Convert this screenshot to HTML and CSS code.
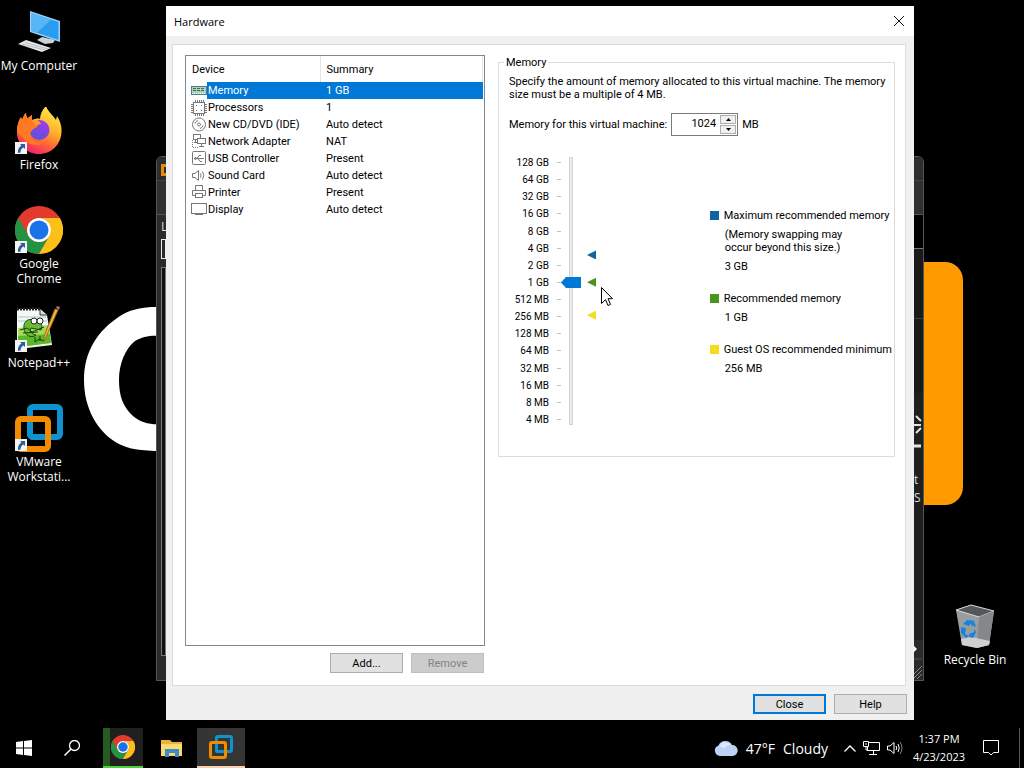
FILE: index.html
```html
<!DOCTYPE html>
<html lang="en">
<head>
  <title>Hardware</title>
  <meta charset="UTF-8">
  <link rel="stylesheet" href="styles.css">
</head>
<body>
  <!-- Shared icons -->
  <svg class="sprite" aria-hidden="true">
    <symbol id="chrome" viewBox="0 0 48 48">
      <circle cx="24" cy="24" r="24" fill="#e23b2e"/>
      <path d="M3.2 12L13.6 30A12 12 0 0 0 34.4 30L24 48A24 24 0 0 1 3.2 12Z" fill="#229342"/>
      <path d="M44.8 12A24 24 0 0 1 24 48L34.4 30A12 12 0 0 0 24 12Z" fill="#fbc116"/>
      <circle cx="24" cy="24" r="12" fill="#fff"/>
      <circle cx="24" cy="24" r="9.5" fill="#1a73e8"/>
    </symbol>
    <symbol id="vmware" viewBox="0 0 48 48">
      <rect x="15" y="3" width="30" height="30" rx="3" fill="none" stroke="#0f93d0" stroke-width="6"/>
      <rect x="3" y="15" width="30" height="30" rx="3" fill="none" stroke="#f38b00" stroke-width="6"/>
      <path d="M15 18v12a3 3 0 0 0 3 3h8" fill="none" stroke="#0f93d0" stroke-width="6"/>
    </symbol>
    <symbol id="shortcut" viewBox="0 0 12 12">
      <rect width="12" height="12" fill="#f4f4f4"/>
      <path d="M5 2h5v5L8.5 5.5C6.5 6.5 5.5 8 5.5 10.5L3 11C2.5 7.5 4 5 6.500 3.5Z" fill="#2c5c9c"/>
    </symbol>
  </svg>

  <main class="desktop">
    <div class="wallpaper-orange"></div>
    <svg class="wallpaper-ring" viewBox="0 0 80 146" aria-hidden="true">
      <path d="M80 1H68C56 2 46 4 37 10C14 25 1 46 1 74C1 102 14 125 34 137C45 143 57 145 80 145V118C68 119 58 117 50 110C40 101 36 90 36 74C36 58 42 43 52 35C60 30 68 29 80 30Z" fill="#fff"/>
    </svg>

    <nav class="shortcuts">
      <a href="#" class="shortcut">
        <svg class="shortcut-icon" viewBox="0 0 48 48">
          <path d="M15 3L45 13V34L15 24Z" fill="#9bd3f5"/>
          <path d="M16.5 5L43.5 14V32L16.5 23Z" fill="#2b9df0"/>
          <path d="M16.5 5L36 11.5L22 25L16.5 23Z" fill="#58b6f6"/>
          <path d="M22 32L27 29L40 32L38 35L30 36Z" fill="#c9d3d8"/>
          <path d="M3 36L11 32L36 40L27 44Z" fill="#e5e8e9"/>
          <path d="M7 36L30 42M10 34.5L33 41" stroke="#b7bcbf" stroke-width="1"/>
        </svg>
        <span>My Computer</span>
      </a>
      <a href="#" class="shortcut">
        <svg class="shortcut-icon" viewBox="0 0 48 48">
          <defs>
            <linearGradient id="fire" x1="0.8" y1="0" x2="0.35" y2="1">
              <stop offset="0" stop-color="#fff04a"/>
              <stop offset="0.45" stop-color="#ffb02a"/>
              <stop offset="0.7" stop-color="#ff6a35"/>
              <stop offset="1" stop-color="#f3206b"/>
            </linearGradient>
            <linearGradient id="globe" x1="0.8" y1="0" x2="0.2" y2="1">
              <stop offset="0" stop-color="#a33bea"/>
              <stop offset="1" stop-color="#5553d8"/>
            </linearGradient>
          </defs>
          <path d="M31 -1C33 5 38 8 41 13L42 9C45 14 47 19 46.5 25C46 38 36 47 24 47C11 47 2 37 2 25C2 18 4 13 6 10L7 13C9 9 9 7 11 6C11 9 12 11 13 11L17 8L17 13C20 12 23 11 25 12C25 7 28 2 31 -1Z" fill="url(#fire)"/>
          <circle cx="24.5" cy="23" r="10" fill="url(#globe)"/>
          <path d="M2 25C2 18 4 13 6 10L7 13C9 9 9 7 11 6C11 9 12 11 13 11L17 8L17 13C19 15 20 17 24 17L22 20C18 22 15 24 15 29C17 34 23 37 30 34C24 41 11 38 7 29Z" fill="#ff7a22"/>
          <path d="M17 13C20 12 25 13 26 17L20 18Z" fill="#ff9a2d"/>
        </svg>
        <svg class="arrow"><use href="#shortcut"/></svg>
        <span>Firefox</span>
      </a>
      <a href="#" class="shortcut">
        <svg class="shortcut-icon"><use href="#chrome"/></svg>
        <svg class="arrow"><use href="#shortcut"/></svg>
        <span>Google<br>Chrome</span>
      </a>
      <a href="#" class="shortcut">
        <svg class="shortcut-icon" viewBox="0 0 48 48">
          <path d="M2 4H25L32 10L37 40L12 43L2 42Z" fill="#f4f8f2"/>
          <path d="M3 12H31M3 16H32" stroke="#a9c6df" stroke-width="1"/>
          <path d="M3 23L34 20L36 38L12 41L3 40Z" fill="#a4dc56"/>
          <path d="M3 31L35 29L36 38L12 41L3 40Z" fill="#59b928"/>
          <path d="M2 4H26" stroke="#222" stroke-width="3" stroke-dasharray="2 1"/>
          <path d="M25 4V10H32" fill="#ddd" stroke="#333"/>
          <path d="M21 17C14 11 8 17 9 23C9 30 16 34 21 30C17 29 14 26 16 23L26 25C28 20 26 17 21 17Z" fill="#67bd35" stroke="#1d4714"/>
          <circle cx="19" cy="16" r="3" fill="#fff" stroke="#222"/>
          <circle cx="25" cy="16" r="3" fill="#fff" stroke="#222"/>
          <path d="M5 25L12 23L17 27L29 22M8 28L23 27M20 32V37L24 34L29 36M25 31V36" fill="none" stroke="#173f14"/>
          <path d="M43 5L31 32L29 36L29 31L40 4Z" fill="#f6b635" stroke="#a06923"/>
          <path d="M41 3L44 5L45 2L42 1Z" fill="#ba696c"/>
        </svg>
        <svg class="arrow"><use href="#shortcut"/></svg>
        <span>Notepad++</span>
      </a>
      <a href="#" class="shortcut">
        <svg class="shortcut-icon"><use href="#vmware"/></svg>
        <svg class="arrow"><use href="#shortcut"/></svg>
        <span>VMware<br>Workstati...</span>
      </a>
    </nav>

    <a href="#" class="shortcut recycle">
      <svg class="shortcut-icon" viewBox="0 0 48 48">
        <path d="M5 8L20 3L43 9L38 43L26 46L11 43Z" fill="#9a9d9e"/>
        <path d="M5 8L20 3L43 9L28 15Z" fill="#55585a" stroke="#d5d7d8"/>
        <path d="M28 15L43 9L38 43L26 46Z" fill="#858889"/>
        <path d="M10 37L20 35L39 39L38 43L26 46L11 43Z" fill="#cfd0cf"/>
        <path d="M12 22L16 18L21 19L18 24ZM19 18L23 19L25 25L20 23ZM10 25L15 26L14 32L18 34L15 36L10 31ZM18 32L23 30V27L25 30L22 36L18 35Z" fill="#1583e0"/>
      </svg>
      <span>Recycle Bin</span>
    </a>

    <!-- Workstation window behind the dialog -->
    <section class="back-window">
      <div class="edge edge-left">
        <div class="edge-title"><i class="edge-logo"></i></div>
        <div class="edge-menu"></div>
        <div class="edge-label">L</div>
        <div class="edge-search"></div>
        <div class="edge-tree"></div>
      </div>
      <div class="edge edge-right">
        <div class="edge-title"></div>
        <div class="edge-menu"></div>
        <div class="edge-tabs"></div>
        <div class="edge-view"></div>
        <div class="edge-home">
          <svg viewBox="0 0 8 50" width="8" height="50" aria-hidden="true">
            <path d="M0 20H7M2 11L7 16M2 28L7 23" stroke="#e4e4e4" stroke-width="2"/>
            <path d="M0 41H7" stroke="#e4e4e4" stroke-width="3"/>
          </svg>
          <span>t</span>
          <span>S</span>
        </div>
        <svg class="edge-grip" viewBox="0 0 8 40" aria-hidden="true">
          <path d="M0 6L3 9L0 12Z" fill="#fff"/>
          <path d="M0 19H8" stroke="#555"/>
          <path d="M0 34L8 26M0 38L8 30M3 39L8 34" stroke="#888"/>
        </svg>
      </div>
    </section>

    <!-- Hardware dialog -->
    <section class="dialog" role="dialog" aria-labelledby="dialog-title">
      <header class="titlebar">
        <h1 id="dialog-title">Hardware</h1>
        <button class="close-x" aria-label="Close window">
          <svg viewBox="0 0 10 10" width="10" height="10"><path d="M0 0L10 10M10 0L0 10" stroke="#111"/></svg>
        </button>
      </header>

      <div class="panel">
        <div class="devices">
          <div class="listbox">
            <table class="device-table">
              <thead>
                <tr><th>Device</th><th>Summary</th></tr>
              </thead>
              <tbody>
                <tr class="selected">
                  <td><svg viewBox="0 0 16 16"><rect x="0.5" y="3.5" width="15" height="8" fill="#a8d5b5" stroke="#5a7792"/><path d="M2 5.500H14M2 7.500H14" stroke="#46646b" stroke-dasharray="3 1"/><path d="M1 10.500H15" stroke="#fff" stroke-dasharray="1 1"/></svg><span>Memory</span></td>
                  <td>1 GB</td>
                </tr>
                <tr>
                  <td><svg viewBox="0 0 16 16"><rect x="2.5" y="2.5" width="11" height="11"/><path d="M4.5 0V2M6.5 0V2M8.5 0V2M10.5 0V2M12.5 0V2M4.5 14V16M6.5 14V16M8.5 14V16M10.5 14V16M12.5 14V16M0 4.5H2M0 6.5H2M0 8.5H2M0 10.5H2M0 12.5H2M14 4.5H16M14 6.5H16M14 8.5H16M14 10.5H16M14 12.5H16M5 5.5H6M10 5.5H11M5 10.5H6M10 10.5H11"/></svg><span>Processors</span></td>
                  <td>1</td>
                </tr>
                <tr>
                  <td><svg viewBox="0 0 16 16"><circle cx="8" cy="7.5" r="6.5"/><circle cx="8" cy="7.5" r="1.5"/><path d="M4 6.5A4 4 0 0 1 7 3.5M9 11.5A4 4 0 0 0 12 8.5"/></svg><span>New CD/DVD (IDE)</span></td>
                  <td>Auto detect</td>
                </tr>
                <tr>
                  <td><svg viewBox="0 0 16 16"><rect x="2.5" y="0.5" width="7" height="5"/><rect x="6.5" y="4.5" width="8" height="5" fill="#fff"/><path d="M10.5 10V12M8 12.5H13M4.5 6V8M3 8.5H6"/><path d="M1.5 6V13.5H8" stroke-dasharray="1 1"/></svg><span>Network Adapter</span></td>
                  <td>NAT</td>
                </tr>
                <tr>
                  <td><svg viewBox="0 0 16 16"><rect x="1.5" y="0.5" width="13" height="13" rx="1"/><path d="M3 7.5H13M6 7.5L8 4.5H10M7 7.5L9 10.5H11"/><circle cx="4.5" cy="7.5" r="1"/></svg><span>USB Controller</span></td>
                  <td>Present</td>
                </tr>
                <tr>
                  <td><svg viewBox="0 0 16 16"><path d="M1.5 5.5H4L7.5 2.5V12.5L4 9.5H1.5ZM9.5 5.5Q10.5 7.5 9.5 9.5M11.5 3.5Q14 7.5 11.5 11.5"/></svg><span>Sound Card</span></td>
                  <td>Auto detect</td>
                </tr>
                <tr>
                  <td><svg viewBox="0 0 16 16"><path d="M4.5 5V0.5H11.5V5M4 10.5H1.5V5.5H14.5V10.5H12"/><rect x="4.5" y="8.5" width="7" height="4"/></svg><span>Printer</span></td>
                  <td>Present</td>
                </tr>
                <tr>
                  <td><svg viewBox="0 0 16 16"><rect x="0.5" y="1.5" width="15" height="10"/><path d="M4 12.5H12"/></svg><span>Display</span></td>
                  <td>Auto detect</td>
                </tr>
              </tbody>
            </table>
          </div>
          <div class="device-buttons">
            <button class="btn">Add...</button>
            <button class="btn" disabled>Remove</button>
          </div>
        </div>

        <fieldset class="memory">
          <legend>Memory</legend>
          <p>Specify the amount of memory allocated to this virtual machine. The memory size must be a multiple of 4 MB.</p>

          <div class="memory-row">
            <label for="memory-size">Memory for this virtual machine:</label>
            <div class="spinner">
              <input type="text" id="memory-size" value="1024">
              <div class="spinner-buttons">
                <button aria-label="Increase"><svg viewBox="0 0 5 3" width="5" height="3"><path d="M0 3L2.5 0L5 3Z"/></svg></button>
                <button aria-label="Decrease"><svg viewBox="0 0 5 3" width="5" height="3"><path d="M0 0L2.5 3L5 0Z"/></svg></button>
              </div>
            </div>
            <span>MB</span>
          </div>

          <div class="memory-scale">
            <ul class="scale-labels">
              <li>128 GB</li>
              <li>64 GB</li>
              <li>32 GB</li>
              <li>16 GB</li>
              <li>8 GB</li>
              <li>4 GB</li>
              <li>2 GB</li>
              <li>1 GB</li>
              <li>512 MB</li>
              <li>256 MB</li>
              <li>128 MB</li>
              <li>64 MB</li>
              <li>32 MB</li>
              <li>16 MB</li>
              <li>8 MB</li>
              <li>4 MB</li>
            </ul>
            <input type="range" class="scale-slider" min="0" max="15" value="8" aria-label="Memory size">
            <div class="scale-marks">
              <i class="mark max" style="top: 37%"></i>
              <i class="mark rec" style="top: 47%"></i>
              <i class="mark min" style="top: 59%"></i>
            </div>
            <dl class="legend">
              <dt class="max">Maximum recommended memory</dt>
              <dd>(Memory swapping may<br>occur beyond this size.)</dd>
              <dd>3 GB</dd>
              <dt class="rec">Recommended memory</dt>
              <dd>1 GB</dd>
              <dt class="min">Guest OS recommended minimum</dt>
              <dd>256 MB</dd>
            </dl>
          </div>
        </fieldset>
      </div>

      <footer class="dialog-buttons">
        <button class="btn default">Close</button>
        <button class="btn">Help</button>
      </footer>
    </section>

    <svg class="cursor" viewBox="0 0 12 20" aria-hidden="true">
      <path d="M0.5 0.5V16.5L4.5 12.7L7 18.5L9.5 17.4L7 11.7H11.5Z" fill="#fff" stroke="#000"/>
    </svg>
  </main>

  <footer class="taskbar">
    <button class="task" aria-label="Start">
      <svg viewBox="0 0 16 16" width="16" height="16" fill="#fff"><path d="M0 2L7 1V7.5H0ZM8 1L16 0V7.5H8ZM0 8.5H7V15L0 14ZM8 8.5H16V16L8 15Z"/></svg>
    </button>
    <button class="task" aria-label="Search">
      <svg viewBox="0 0 16 16" width="16" height="16" fill="none" stroke="#fff"><circle cx="10.5" cy="5.5" r="5" stroke-width="1.3"/><path d="M7 9L0.5 15.5" stroke-width="1.5"/></svg>
    </button>
    <button class="task chrome" aria-label="Google Chrome">
      <svg width="24" height="24"><use href="#chrome"/></svg>
    </button>
    <button class="task files" aria-label="File Explorer">
      <svg viewBox="0 0 22 18" width="22" height="18"><path d="M0 1H9L11 3H21V17H0Z" fill="#e8b339"/><path d="M0 5H21V17H0Z" fill="#fbdb6b"/><path d="M4 10H18V18H14V14H8V18H4Z" fill="#3d8bce"/></svg>
    </button>
    <button class="task active" aria-label="VMware Workstation">
      <svg width="24" height="24"><use href="#vmware"/></svg>
    </button>

    <div class="tray">
      <a href="#" class="weather">
        <svg viewBox="0 0 24 16" width="24" height="16"><path d="M6 16A6 5.5 0 0 1 4.5 5.5A7.5 7.5 0 0 1 18 5A5.5 5.5 0 0 1 18.5 16Z" fill="#bcd3f5"/><path d="M5 7A7 7 0 0 1 17 5Q12 5 10 9Q8 6 5 7Z" fill="#dce8fb"/></svg>
        <span>47°F</span>
        <span>Cloudy</span>
      </a>
      <svg viewBox="0 0 12 7" width="12" height="7" fill="none" stroke="#fff"><path d="M0.5 6.5L6 1L11.5 6.5" stroke-width="1.3"/></svg>
      <svg viewBox="0 0 17 14" width="17" height="14" fill="none" stroke="#fff"><path d="M6 1.5H16.5V9.5H4.5V6M10.5 10V13M6 13.5H14"/><path d="M0.5 0.5H5.5V5.5H0.5ZM2 3H4M3 5V9H5"/></svg>
      <svg viewBox="0 0 16 14" width="16" height="14" fill="none" stroke="#fff"><path d="M0.5 5H3L7 1.5V12.5L3 9H0.5ZM9 5Q10.5 7 9 9M11 3Q13.500 7 11 11"/><path d="M13 1Q17 7 13 13" stroke="#888"/></svg>
      <div class="clock">
        <time>1:37 PM</time>
        <time>4/23/2023</time>
      </div>
      <button class="notify" aria-label="Notifications">
        <svg viewBox="0 0 16 16" width="16" height="16" fill="none" stroke="#fff"><path d="M0.5 0.5H15.5V12.5H10.5L8 15L5.500 12.5H0.5Z"/></svg>
      </button>
      <i class="show-desktop"></i>
    </div>
  </footer>
</body>
</html>
```
FILE: styles.css
```css
* {
  box-sizing: border-box;
}
body {
  display: flex;
  flex-direction: column;
  min-height: 100vh;
  margin: 0;
  background-color: #000;
  color: #fff;
  font-family: "Open Sans", "Noto Sans", sans-serif;
  font-size: 12px;
  overflow: hidden;
}
button, input {
  font: inherit;
  color: inherit;
}
.sprite {
  display: none;
}

/* Desktop */
.desktop {
  position: relative;
  flex: 1;
}
.wallpaper-orange {
  position: absolute;
  top: 262px;
  right: 61px;
  width: 200px;
  height: 243px;
  background-color: #ff9b00;
  border-radius: 18px;
}
.wallpaper-ring {
  position: absolute;
  top: 306px;
  left: 83px;
  width: 80px;
  height: 146px;
}
.shortcuts {
  display: grid;
  grid-auto-rows: 99px;
  width: 78px;
  padding-top: 8px;
}
.shortcut {
  position: relative;
  display: flex;
  flex-direction: column;
  align-items: center;
  gap: 2px;
  color: #fff;
  line-height: 15px;
  text-align: center;
  text-decoration: none;
  white-space: nowrap;
}
.shortcut-icon {
  width: 48px;
  height: 48px;
}
.arrow {
  position: absolute;
  top: 35px;
  left: 15px;
  width: 12px;
  height: 12px;
}
.recycle {
  position: absolute;
  right: 10px;
  bottom: 61px;
  width: 78px;
}

/* Window behind */
.back-window {
  position: absolute;
  top: 156px;
  left: 156px;
  right: 100px;
  bottom: 47px;
  display: flex;
  justify-content: space-between;
  background-color: #1c1c1c;
  border: 1px solid #555;
  border-radius: 6px 6px 0 0;
  overflow: hidden;
}
.edge {
  display: flex;
  flex-direction: column;
  width: 9px;
  color: #ddd;
  background-color: #2a2a2a;
}
.edge-title {
  height: 24px;
  padding: 7px 0 0 4px;
  background-color: #2d2d2d;
  border-bottom: 1px solid #444;
}
.edge-logo {
  display: block;
  width: 12px;
  height: 12px;
  border: 3px solid #e58a0c;
}
.edge-menu {
  height: 34px;
  background-color: #303030;
  border-bottom: 1px solid #555;
}
.edge-label {
  height: 24px;
  padding-left: 4px;
  line-height: 24px;
}
.edge-search {
  height: 20px;
  margin-left: 4px;
  border: 1px solid #eee;
}
.edge-tree {
  flex: 1;
  margin: 8px 0 24px 4px;
  background-color: #111;
  border: 1px solid #777;
}
.edge-tabs {
  height: 34px;
  background-color: #000;
  border-bottom: 1px solid #777;
}
.edge-view {
  height: 144px;
  background: linear-gradient(#3a3a3a, #3a3a3a) 0 69px / 100% 1px no-repeat #1a1a1a;
}
.edge-home {
  display: flex;
  flex: 1;
  flex-direction: column;
  padding-top: 12px;
  line-height: 18px;
  background-color: #1f1f1f;
}
.edge-home svg {
  margin-bottom: 16px;
}
.edge-grip {
  width: 8px;
  height: 40px;
}
.edge-right {
  overflow: hidden;
}

/* Dialog */
.dialog {
  position: absolute;
  top: 6px;
  left: 166px;
  right: 110px;
  bottom: 8px;
  display: flex;
  flex-direction: column;
  background-color: #f0f0f0;
  color: #000;
  font-family: Roboto, "Noto Sans", sans-serif;
  font-size: 11px;
  line-height: 13px;
}
.titlebar {
  display: flex;
  justify-content: space-between;
  align-items: center;
  height: 30px;
  padding: 0 8px;
  background-color: #fff;
}
.titlebar h1 {
  margin: 0;
  font-family: "Open Sans", "Noto Sans", sans-serif;
  font-size: 11px;
  font-weight: normal;
}
.close-x {
  display: flex;
  padding: 2px;
  background: none;
  border: none;
}
.panel {
  display: flex;
  flex: 1;
  gap: 13px;
  margin: 8px 8px 0 6px;
  padding: 10px 10px 12px 12px;
  background-color: #fff;
  border: 1px solid #dcdcdc;
}
.devices {
  display: flex;
  flex-direction: column;
  gap: 7px;
  width: 300px;
}
.listbox {
  flex: 1;
  padding-right: 1px;
  border: 1px solid #828790;
}
.device-table {
  width: 100%;
  border-collapse: collapse;
  table-layout: fixed;
}
.device-table th {
  height: 26px;
  padding: 0 6px;
  border-right: 1px solid #e5e5e5;
  font-weight: normal;
  text-align: left;
}
.device-table th:first-child {
  width: 134px;
}
.device-table td {
  height: 17px;
  padding: 0 6px;
}
.device-table td:first-child {
  display: flex;
  align-items: center;
  padding: 0 0 0 5px;
}
.device-table svg {
  width: 16px;
  height: 16px;
  fill: none;
  stroke: #777;
}
.device-table span {
  flex: 1;
  padding-left: 1px;
  line-height: 17px;
}
.selected td:last-child, .selected span {
  background-color: #0078d7;
  color: #fff;
}
.device-buttons, .dialog-buttons {
  display: flex;
  justify-content: flex-end;
  gap: 8px;
}
.device-buttons {
  padding-right: 1px;
}
.dialog-buttons {
  padding: 8px 7px 6px;
}
.btn {
  width: 73px;
  height: 20px;
  padding: 0;
  background-color: #e1e1e1;
  border: 1px solid #adadad;
}
.btn:disabled {
  background-color: #ccc;
  border-color: #bfbfbf;
  color: #838383;
}
.btn.default {
  border: 2px solid #0078d7;
}

/* Memory settings */
.memory {
  flex: 1;
  align-self: flex-start;
  min-width: 0;
  margin: 1px 0 0;
  padding: 6px 2px 28px 10px;
  border: 1px solid #dcdcdc;
}
.memory legend {
  margin-left: -5px;
  padding: 0 2px;
}
.memory p {
  margin: 0 0 12px;
}
.memory-row {
  display: flex;
  align-items: center;
  gap: 4px;
}
.spinner {
  display: flex;
  width: 67px;
  height: 23px;
  padding: 1px;
  border: 1px solid #7a7a7a;
}
.spinner input {
  flex: 1;
  min-width: 0;
  padding: 0 4px 2px 0;
  border: none;
  outline: none;
  text-align: right;
}
.spinner-buttons {
  display: flex;
  flex-direction: column;
  gap: 1px;
  width: 16px;
}
.spinner-buttons button {
  display: flex;
  flex: 1;
  justify-content: center;
  align-items: center;
  padding: 0;
  background-color: #f0f0f0;
  border: 1px solid #adadad;
}
.memory-scale {
  display: flex;
  height: 274px;
  margin-top: 18px;
}
.scale-labels {
  display: flex;
  flex-direction: column;
  width: 52px;
  margin: 0;
  padding: 0;
  font-size: 10px;
  list-style: none;
}
.scale-labels li {
  display: flex;
  flex: 1;
  justify-content: flex-end;
  align-items: center;
  gap: 8px;
}
.scale-labels li::after {
  content: "";
  width: 4px;
  height: 1px;
  background-color: #c0c0c0;
}
.scale-slider {
  align-self: center;
  appearance: none;
  width: 20px;
  height: 268px;
  margin: 0;
  background: none;
  direction: rtl;
  writing-mode: vertical-lr;
}
.scale-slider::-webkit-slider-runnable-track {
  width: 4px;
  height: 100%;
  background-color: #e7eaea;
  border: 1px solid #d6d6d6;
}
.scale-slider::-webkit-slider-thumb {
  appearance: none;
  width: 20px;
  height: 11px;
  margin-left: -9px;
  background-color: #0078d7;
  clip-path: polygon(0 50%, 25% 0, 100% 0, 100% 100%, 25% 100%);
}
.scale-marks {
  position: relative;
  width: 15px;
}
.mark {
  position: absolute;
  right: 0;
  width: 9px;
  height: 9px;
  margin-top: -5px;
  clip-path: polygon(0 50%, 100% 0, 100% 100%);
}
.legend {
  margin: 55px 0 0 auto;
}
.legend dt {
  display: flex;
  align-items: center;
  gap: 5px;
}
.legend dt::before {
  content: "";
  width: 9px;
  height: 9px;
}
.legend dd {
  margin: 6px 0 0 15px;
}
.legend dd + dt {
  margin-top: 19px;
}
.mark.max, .legend .max::before {
  background-color: #0e64a0;
}
.mark.rec, .legend .rec::before {
  background-color: #4a951d;
}
.mark.min, .legend .min::before {
  background-color: #f5dc1c;
}
.cursor {
  position: absolute;
  top: 287px;
  left: 601px;
  width: 12px;
  height: 20px;
}

/* Taskbar */
.taskbar {
  display: flex;
  height: 40px;
}
.task {
  display: flex;
  justify-content: center;
  align-items: center;
  width: 48px;
  padding: 0;
  background: none;
  border: none;
}
.task.chrome {
  width: 40px;
  margin-left: 7px;
  background: linear-gradient(to right, #245c22 7px, #202020 7px);
  border-bottom: 2px solid #4cd137;
}
.task.files {
  width: 54px;
  padding-left: 3px;
}
.task.active {
  background-color: #353535;
  border-bottom: 2px solid #f7cfa8;
}
.tray {
  display: flex;
  align-items: center;
  gap: 7px;
  margin-left: auto;
}
.weather {
  display: flex;
  align-items: center;
  gap: 8px;
  margin-right: 9px;
  color: #fff;
  font-size: 14px;
  text-decoration: none;
}
.clock {
  display: flex;
  flex-direction: column;
  width: 58px;
  font-size: 11px;
  line-height: 18px;
  text-align: center;
}
.notify {
  display: flex;
  margin: 0 13px 0 8px;
  padding: 0;
  background: none;
  border: none;
}
.show-desktop {
  align-self: stretch;
  width: 5px;
  border-left: 1px solid #555;
}
```
